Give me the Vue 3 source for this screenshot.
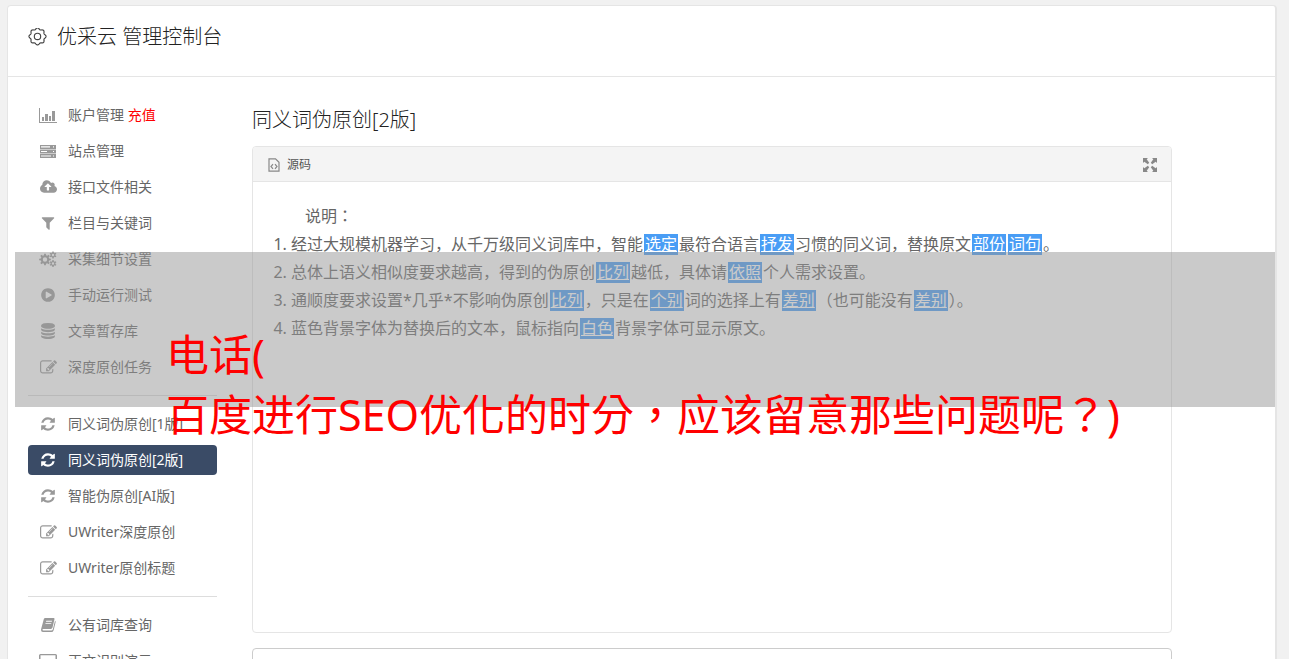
<script setup>
import { ref } from 'vue'

const gear = (cx, cy, outer, inner, teeth) => {
  const points = []
  const step = (Math.PI * 2) / teeth
  for (let i = 0; i < teeth; i++) {
    const a = i * step - Math.PI / 2
    const marks = [[-0.3, inner], [-0.18, outer], [0.18, outer], [0.3, inner]]
    for (const [k, r] of marks) {
      points.push(`${(cx + r * Math.cos(a + k * step)).toFixed(2)} ${(cy + r * Math.sin(a + k * step)).toFixed(2)}`)
    }
  }
  return `M${points.join('L')}Z`
}
const ring = (cx, cy, r) => `M${cx - r} ${cy}a${r} ${r} 0 1 0 ${2 * r} 0a${r} ${r} 0 1 0 ${-2 * r} 0Z`

// A rounded outline with eight lobes.
const lobes = (cx, cy, r, depth, count) => {
  const points = []
  for (let i = 0; i < 96; i++) {
    const a = (i / 96) * Math.PI * 2
    const d = r + depth * Math.cos(count * a)
    points.push(`${(cx + d * Math.cos(a)).toFixed(2)} ${(cy + d * Math.sin(a)).toFixed(2)}`)
  }
  return `M${points.join('L')}Z`
}
const headerGear = lobes(9, 8, 7.4, 0.7, 8)

const icons = {
  chart: { box: '0 0 18 15', w: 18, h: 15, d: 'M0 0h1v14h17v1H0zM3 9h2v4H3zM6 6h3v7H6zM10 8h2v5h-2zM13 3h3v10h-3z' },
  server: { box: '0 0 16 13', w: 16, h: 13, d: 'M0 0h16v4H0zM0 4.5h16v4H0zM0 9h16v4H0zM1 1.3v1.2h9V1.3zM1 5.9v1.2h6V5.9zM1 10.4v1.2h10v-1.2zM13 1.3v1.2h1V1.3zM13 5.9v1.2h1V5.9zM13 10.4v1.2h1v-1.2z' },
  upload: { box: '0 128 1920 1536', w: 17, h: 14, d: 'M1280 864q0-14-9-23l-352-352q-9-9-23-9t-23 9l-351 351q-10 12-10 24 0 14 9 23t23 9h224v352q0 13 9.5 22.5t22.5 9.5h192q13 0 22.5-9.5t9.5-22.5v-352h224q13 0 22.5-9.5t9.5-22.5zm640 288q0 159-112.5 271.5t-271.5 112.5h-1088q-185 0-316.5-131.5t-131.5-316.5q0-130 70-240t188-165q-2-30-2-43 0-212 150-362t362-150q156 0 285.5 87t188.5 231q71-62 166-62 106 0 181 75t75 181q0 76-41 138 130 31 213.5 135.5t83.5 238.5z' },
  filter: { box: '0 0 1792 1792', w: 16, h: 16, d: 'M1595 295q17 41-14 70l-493 493v742q0 42-39 59-13 5-25 5-27 0-45-19l-256-256q-19-19-19-45v-486l-493-493q-31-29-14-70 17-39 59-39h1280q42 0 59 39z' },
  cogs: { box: '0 0 18 16', w: 18, h: 16, d: gear(6, 8.5, 5.9, 4.3, 8) + ring(6, 8.5, 2.2) + gear(14, 4, 3.6, 2.5, 6) + ring(14, 4, 1.2) + gear(14, 12.5, 3.6, 2.5, 6) + ring(14, 12.5, 1.2) },
  play: { box: '0 0 1792 1792', w: 16, h: 16, d: 'M896 128q209 0 385.5 103t279.5 279.5 103 385.5-103 385.5-279.5 279.5-385.5 103-385.5-103-279.5-279.5-103-385.5 103-385.5 279.5-279.5 385.5-103zm384 823q32-18 32-55t-32-55l-544-320q-31-19-64-1-32 19-32 56v640q0 37 32 56 16 8 32 8 17 0 32-9z' },
  database: { box: '0 0 1792 1792', w: 16, h: 16, d: 'M896 768q237 0 443-43t325-127v170q0 69-103 128t-280 93.5-385 34.5-385-34.5-280-93.5-103-128v-170q119 84 325 127t443 43zm0 768q237 0 443-43t325-127v170q0 69-103 128t-280 93.5-385 34.5-385-34.5-280-93.5-103-128v-170q119 84 325 127t443 43zm0-384q237 0 443-43t325-127v170q0 69-103 128t-280 93.5-385 34.5-385-34.5-280-93.5-103-128v-170q119 84 325 127t443 43zm0-1152q208 0 385 34.5t280 93.5 103 128v128q0 69-103 128t-280 93.5-385 34.5-385-34.5-280-93.5-103-128v-128q0-69 103-128t280-93.5 385-34.5z' },
  edit: { box: '0 0 1792 1792', w: 17, h: 17, d: 'M888 1184l116-116-152-152-116 116v56h96v96h56zm440-720q-16-16-33 1l-350 350q-17 17-1 33t33-1l350-350q17-17 1-33zm80 594v190q0 119-84.5 203.5t-203.5 84.5h-832q-119 0-203.5-84.5t-84.5-203.5v-832q0-119 84.5-203.5t203.5-84.5h832q63 0 117 25 15 7 18 23 3 17-9 29l-49 49q-14 14-32 8-23-6-45-6h-832q-66 0-113 47t-47 113v832q0 66 47 113t113 47h832q66 0 113-47t47-113v-126q0-13 9-22l64-64q15-15 35-7t20 29zm-96-738l288 288-672 672h-288v-288zm444 132l-92 92-288-288 92-92q28-28 68-28t68 28l152 152q28 28 28 68t-28 68z' },
  refresh: { box: '0 0 1792 1792', w: 16, h: 16, d: 'M1639 1056q0 5-1 7-64 268-268 434.5t-478 166.5q-146 0-282.5-55t-243.5-157l-129 129q-19 19-45 19t-45-19-19-45v-448q0-26 19-45t45-19h448q26 0 45 19t19 45-19 45l-137 137q71 66 161 102t187 36q134 0 250-65t186-179q11-17 53-117 8-23 30-23h192q13 0 22.5 9.5t9.5 22.5zm25-800v448q0 26-19 45t-45 19h-448q-26 0-45-19t-19-45 19-45l138-138q-148-137-349-137-134 0-250 65t-186 179q-11 17-53 117-8 23-30 23h-199q-13 0-22.5-9.5t-9.5-22.5v-7q65-268 270-434.5t480-166.5q146 0 284 55.5t245 156.5l130-129q19-19 45-19t45 19 19 45z' },
  book: { box: '0 0 16 15', w: 15, h: 14, d: 'M4.500 0H13.500q1.200 0 .9 1.300L12.300 10.300q-.4 1.400-1.800 1.400H2.500q-1 0-1 .8t1 .8h8.500q1.300 0 1.700-1.300L15 3q.9.500.6 1.500L13.500 13q-.6 2-2.500 2H2Q0 15 0 12.800q0-.8.400-2L3 1.200Q3.400 0 4.500 0zM5.600 3l-.3 1h6.200l.3-1zM4.900 5.500l-.3 1h6.200l.3-1z' },
  laptop: { box: '0 0 18 15', w: 18, h: 15, d: 'M1.500 0h15Q18 0 18 1.500v9q0 1.500-1.500 1.500H12l1 2v1H5v-1l1-2H1.500Q0 12 0 10.500v-9Q0 0 1.500 0zM1.500 1.300v8h15v-8z' },
}

const groups = [
  [
    { icon: 'chart', text: '账户管理', extra: '充值' },
    { icon: 'server', text: '站点管理' },
    { icon: 'upload', text: '接口文件相关' },
    { icon: 'filter', text: '栏目与关键词' },
    { icon: 'cogs', text: '采集细节设置' },
    { icon: 'play', text: '手动运行测试' },
    { icon: 'database', text: '文章暂存库' },
    { icon: 'edit', text: '深度原创任务' },
  ],
  [
    { icon: 'refresh', text: '同义词伪原创[1版]' },
    { icon: 'refresh', text: '同义词伪原创[2版]' },
    { icon: 'refresh', text: '智能伪原创[AI版]' },
    { icon: 'edit', text: 'UWriter深度原创' },
    { icon: 'edit', text: 'UWriter原创标题' },
  ],
  [
    { icon: 'book', text: '公有词库查询' },
    { icon: 'laptop', text: '正文识别演示' },
  ],
]
const active = ref('同义词伪原创[2版]')

// Words in braces are the replaced ones.
const lines = [
  '经过大规模机器学习，从千万级同义词库中，智能{选定}最符合语言{抒发}习惯的同义词，替换原文{部份}{词句}。',
  '总体上语义相似度要求越高，得到的伪原创{比列}越低，具体请{依照}个人需求设置。',
  '通顺度要求设置*几乎*不影响伪原创{比列}，只是在{个别}词的选择上有{差别}（也可能没有{差别}）。',
  '蓝色背景字体为替换后的文本，鼠标指向{白色}背景字体可显示原文。',
].map((line) =>
  line.split(/(\{.+?\})/).filter(Boolean).map((text) => ({
    text: text.replace(/[{}]/g, ''),
    replaced: text[0] === '{',
  })),
)
</script>

<template>
  <div class="page">
    <div class="card">
      <header class="top">
        <svg class="top-icon" viewBox="0 0 18 18" width="19" height="19" aria-hidden="true">
          <path :d="headerGear" />
          <circle cx="9" cy="8" r="3" />
        </svg>
        <h1>优采云 管理控制台</h1>
      </header>

      <div class="columns">
        <nav class="side">
          <template v-for="(group, g) in groups" :key="g">
            <hr v-if="g > 0" />
            <a
              v-for="item in group"
              :key="item.text"
              href="#"
              class="item"
              :class="{ active: item.text === active }"
              @click.prevent="active = item.text"
            >
              <span class="icon">
                <svg :viewBox="icons[item.icon].box" :width="icons[item.icon].w" :height="icons[item.icon].h" aria-hidden="true">
                  <path :d="icons[item.icon].d" fill-rule="evenodd" />
                </svg>
              </span>
              <span>{{ item.text }} <em v-if="item.extra">{{ item.extra }}</em></span>
            </a>
          </template>
        </nav>

        <main class="main">
          <h2>同义词伪原创[2版]</h2>
          <section class="panel">
            <div class="toolbar">
              <button type="button" class="tool">
                <svg viewBox="0 0 12 14" width="12" height="14" aria-hidden="true">
                  <path class="line" d="M1 .8h6.500L11 4.300v8.900H1z" />
                  <path class="line" d="M5 6.200L3 8.500l2 2.300M7 6.200l2 2.300-2 2.300" />
                </svg>
                源码
              </button>
              <button type="button" class="tool" aria-label="全屏">
                <svg viewBox="0 0 14 14" width="14" height="14" aria-hidden="true">
                  <path d="M0 0h5L3.700 1.300 6.200 4.800 4.800 6.200 1.300 3.700 0 5zM14 0v5l-1.300-1.300L9.200 6.200 7.800 4.800l2.500-3.500L9 0zM0 14V9l1.300 1.300L4.800 7.800 6.200 9.200l-2.500 3.500L5 14zM14 14H9l1.300-1.300L7.800 9.200 9.200 7.800l3.500 2.500L14 9z" />
                </svg>
              </button>
            </div>
            <div class="body">
              <p class="mid">说明：</p>
              <ol>
                <li v-for="(line, n) in lines" :key="n">
                  <template v-for="(part, i) in line" :key="i"><mark v-if="part.replaced">{{ part.text }}</mark><template v-else>{{ part.text }}</template></template>
                </li>
              </ol>
            </div>
          </section>
          <textarea class="output" aria-label="结果"></textarea>
        </main>
      </div>
    </div>

    <div class="banner">
      <p class="mid">电话(<br />百度进行SEO优化的时分，应该留意那些问题呢？)</p>
    </div>
  </div>
</template>

<style>
body {
  margin: 0;
  background: #f1f1f1;
  overflow: hidden;
}
</style>

<style scoped>
.page {
  position: relative;
  height: 100vh;
  overflow: hidden;
  box-sizing: border-box;
  padding: 5px 12px 0 7px;
  font-family: "Noto Sans", "Noto Sans CJK SC", sans-serif;
  color: #666;
}
.mid {
  font-family: "Noto Sans", "Noto Sans CJK TC", sans-serif;
}
.card {
  background: #fff;
  border: 1px solid #e5e5e5;
  border-right-width: 2px;
  border-radius: 4px;
  min-height: 100vh;
}
.top {
  display: flex;
  align-items: center;
  gap: 10px;
  height: 71px;
  box-sizing: border-box;
  padding: 0 20px 8px;
  border-bottom: 1px solid #e5e5e5;
}
.top-icon {
  fill: none;
  stroke: #444;
  stroke-width: 1.1;
  stroke-linejoin: round;
}
h1,
h2 {
  margin: 0;
  font-size: 20px;
  line-height: 28px;
  font-weight: 300;
  color: #222;
}
.columns {
  display: flex;
  gap: 35px;
  padding: 23px 103px 0 20px;
}
.side {
  flex: 0 0 189px;
  display: flex;
  flex-direction: column;
  gap: 6px;
}
.side hr {
  width: 100%;
  height: 1px;
  margin: 7px 0;
  border: 0;
  background: #ddd;
}
.item {
  display: flex;
  align-items: center;
  gap: 10px;
  height: 30px;
  padding-left: 10px;
  border-radius: 4px;
  font-size: 14px;
  line-height: 20px;
  color: #666;
  text-decoration: none;
  white-space: nowrap;
}
.icon {
  display: flex;
  justify-content: center;
  width: 20px;
  color: #999;
}
.icon svg {
  fill: currentColor;
}
.item em {
  font-style: normal;
  color: #f00;
}
.item.active {
  background: #3a4b66;
  color: #fff;
}
.active .icon {
  color: #fff;
}
.main {
  flex: 1;
  min-width: 0;
  padding-top: 6px;
}
.panel {
  margin-top: 12px;
  border: 1px solid #e5e5e5;
  border-radius: 4px;
  overflow: hidden;
}
.toolbar {
  display: flex;
  justify-content: space-between;
  align-items: center;
  height: 32px;
  padding: 2px 14px 0 15px;
  background: #f4f4f4;
  border-bottom: 1px solid #e5e5e5;
}
.tool {
  display: flex;
  align-items: center;
  gap: 7px;
  padding: 0;
  border: 0;
  background: none;
  font: inherit;
  font-size: 12px;
  line-height: 18px;
  color: #555;
}
.tool svg {
  fill: #888;
}
.tool .line {
  fill: none;
  stroke: #888;
  stroke-width: 1.2;
}
.body {
  min-height: 410px;
  padding: 20px;
  font-size: 16px;
  line-height: 28px;
}
.body p {
  margin: 0;
  text-indent: 2em;
}
.body ol {
  margin: 0;
  padding-left: 18px;
}
mark {
  display: inline-block;
  margin: 0 1px;
  padding: 0 1px;
  line-height: 21px;
  background: #499df5;
  color: #fff;
  text-decoration: underline;
}
.output {
  display: block;
  width: 100%;
  height: 200px;
  box-sizing: border-box;
  margin-top: 15px;
  border: 1px solid #ccc;
  border-radius: 4px;
  resize: none;
}
.banner {
  position: absolute;
  top: 252px;
  left: 15px;
  right: 14px;
  height: 155px;
  background: rgba(150, 150, 150, 0.5);
  pointer-events: none;
}
.banner p {
  margin: 0;
  padding: 73px 0 0 151px;
  font-size: 43px;
  line-height: 60px;
  color: #f00;
  white-space: nowrap;
}
</style>
